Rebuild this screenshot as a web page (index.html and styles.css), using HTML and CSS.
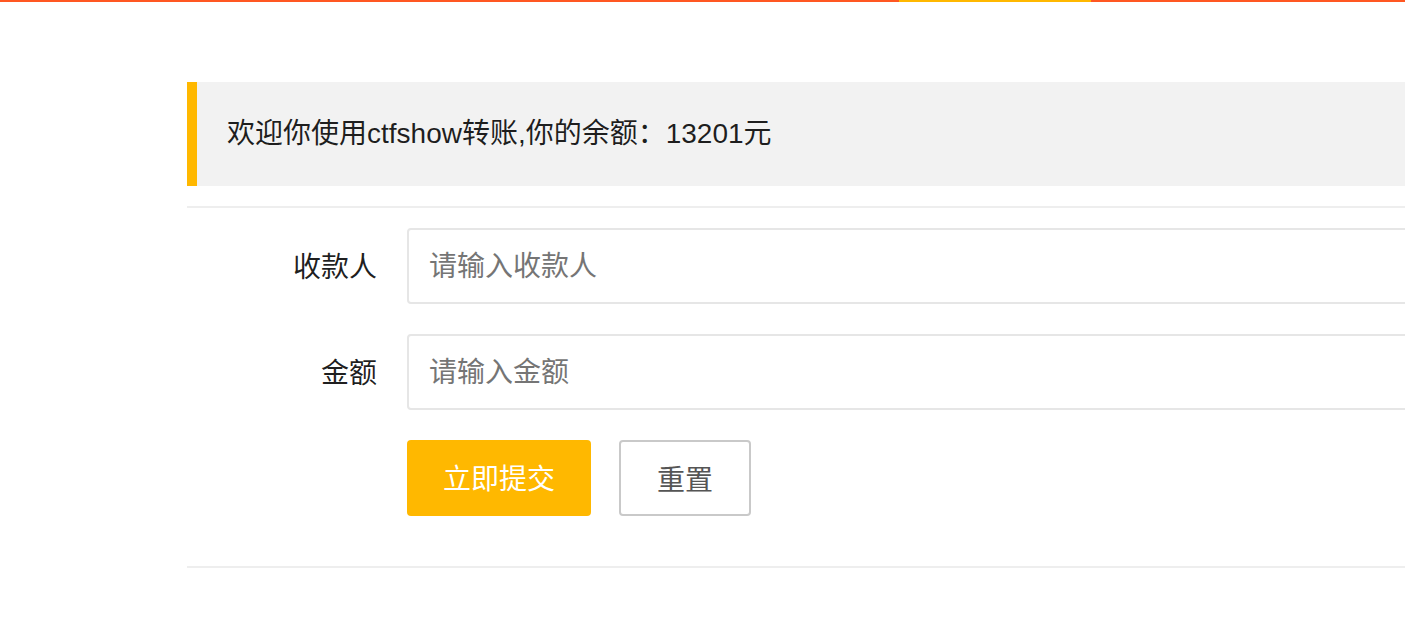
FILE: index.html
```html
<!DOCTYPE html>
<html lang="zh-CN">
<head>
    <meta charset="UTF-8">
    <meta name="viewport" content="width=device-width, initial-scale=1.0">
    <title>ctfshow转账</title>
    <link rel="stylesheet" href="styles.css">
</head>
<body>

    <div class="barra-topo">
        <span class="barra-laranja"></span>
        <span class="barra-amarela"></span>
        <span class="barra-fim"></span>
    </div>

    <div class="container">
        <blockquote class="quote">欢迎你使用ctfshow转账,你的余额：13201元</blockquote>
        <hr>

        <form class="form" id="transferForm">
            <div class="form-item">
                <label class="form-label" for="to">收款人</label>
                <div class="input-block">
                    <input class="input" type="text" id="to" name="to" placeholder="请输入收款人">
                </div>
            </div>
            <div class="form-item">
                <label class="form-label" for="money">金额</label>
                <div class="input-block">
                    <input class="input" type="text" id="money" name="money" placeholder="请输入金额">
                </div>
            </div>
            <div class="form-item">
                <div class="input-block botoes">
                    <button type="submit" class="btn btn-warm">立即提交</button>
                    <button type="reset" class="btn btn-primary">重置</button>
                </div>
            </div>
        </form>
        <hr>

        <div class="rodape">上一页</div>
    </div>

</body>
</html>
```

FILE: styles.css
```css
html, body {
    margin: 0;
    overflow: hidden;
}

body {
    font-family: "Liberation Sans", "Noto Sans CJK SC", sans-serif;
    color: rgba(0, 0, 0, 0.88);
    font-size: 28px;
    background: #fff;
}

.barra-topo {
    display: flex;
    height: 2px;
}

.barra-laranja {
    flex: 1;
    background-color: #FF5722;
}

.barra-amarela {
    width: 192px;
    background-color: #FFB800;
}

.barra-fim {
    width: 314px;
    background-color: #FF5722;
}

.container {
    margin: 80px -200px 0 187px;
}

.quote {
    margin: 0 0 20px 0;
    padding: 30px;
    line-height: 44px;
    border-left: 10px solid #FFB800;
    background-color: #f2f2f2;
}

hr {
    height: 0;
    margin: 20px 0;
    padding: 0;
    border: none;
    border-bottom: 2px solid #eee;
}

.form {
    display: flow-root;
}

.form-item {
    display: flex;
    margin-bottom: 30px;
}

.form-label {
    width: 160px;
    padding: 20px 30px 16px;
    line-height: 40px;
    text-align: right;
    flex-shrink: 0;
}

.input-block {
    flex: 1;
}

.botoes {
    display: flex;
    gap: 28px;
    margin-left: 220px;
}

.input {
    display: block;
    box-sizing: border-box;
    width: 100%;
    height: 76px;
    padding-left: 20px;
    padding-top: 3px;
    border: 2px solid #e6e6e6;
    border-radius: 4px;
    font-family: inherit;
    font-size: 28px;
    color: #333;
    background: #fff;
    outline: none;
}

.input::placeholder {
    color: #757575;
}

.btn {
    box-sizing: border-box;
    height: 76px;
    padding: 3px 36px 0;
    border-radius: 4px;
    font-family: inherit;
    font-size: 28px;
    line-height: 72px;
    cursor: pointer;
}

.btn-warm {
    border: none;
    background-color: #FFB800;
    color: #fff;
}

.btn-primary {
    border: 2px solid #C9C9C9;
    background-color: #fff;
    color: #555;
}

.rodape {
    margin-top: 62px;
    padding-left: 1041px;
    line-height: 44px;
}
```
